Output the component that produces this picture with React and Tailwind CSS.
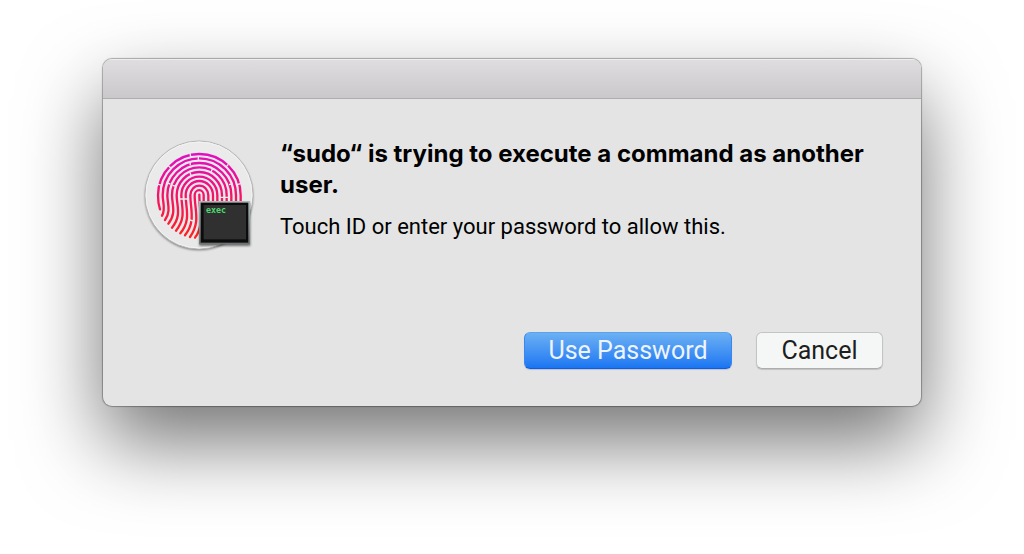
import React from "react";

const RIDGES = [
  "M72 232 C66 215 66 205 66 190 A124 124 0 0 1 314 190 L314 215",
  "M78 251 C90 230 80 212 80 190 A109 110 0 0 1 300 190 L300 215",
  "M87 264 C106 238 94 215 94 190 A95 96 0 0 1 286 190 L286 215",
  "M97 275 C122 245 108 218 108 190 A81 83 0 0 1 272 190 L272 215",
  "M108 287 C138 250 122 222 122 190 A67 69 0 0 1 258 190 L258 215",
  "M120 296 C152 256 136 226 136 190 A54 56 0 0 1 244 190 L244 215",
  "M133 304 C166 264 149 230 149 190 A41 43 0 0 1 231 190 L231 215",
  "M147 310 C180 268 163 232 163 190 A27 29 0 0 1 217 190 L217 215",
  "M162 315 C194 270 176 235 176 190 A13 15 0 0 1 203 190 L203 215",
  "M177 317 C205 280 190 235 190 188",
];

const BREAKS = [
  "M162 62 L164 74",
  "M162 90 L163 100",
  "M96 100 L105 109",
  "M66 157 L79 160",
  "M277 97 L269 106",
  "M313 155 L301 159",
  "M187 75 L187 86",
  "M94 153 L103 156",
  "M110 160 L122 164",
  "M229 111 L225 120",
  "M161 120 L165 129",
  "M252 196 L278 196",
  "M129 201 L157 201",
  "M157 262 L171 267",
  "M279 158 L290 155",
];

function TouchIdIcon() {
  return (
    <svg
      viewBox="24 24 330 330"
      className="size-[110px] shrink-0 overflow-visible"
      role="img"
      aria-label="Touch ID"
    >
      <defs>
        <linearGradient id="ink" gradientUnits="userSpaceOnUse" x1="0" y1="62" x2="0" y2="320">
          <stop offset="0" stopColor="#e00fc4" />
          <stop offset="0.25" stopColor="#ec109c" />
          <stop offset="0.5" stopColor="#f41466" />
          <stop offset="1" stopColor="#ff231c" />
        </linearGradient>
        <linearGradient id="disc" x1="0" y1="0" x2="0" y2="1">
          <stop offset="0" stopColor="#ebebeb" />
          <stop offset="1" stopColor="#e8e8e8" />
        </linearGradient>
        <linearGradient id="frame" x1="0" y1="0" x2="0" y2="1">
          <stop offset="0" stopColor="#a9b8ba" />
          <stop offset="1" stopColor="#6d7273" />
        </linearGradient>
        <filter id="soft" x="-20%" y="-20%" width="140%" height="140%">
          <feGaussianBlur stdDeviation="3" />
        </filter>
      </defs>
      <circle cx="189" cy="193" r="162" fill="#000" opacity="0.45" filter="url(#soft)" />
      <circle cx="189" cy="189" r="162" fill="url(#disc)" stroke="#b5b5b5" strokeWidth="3" />
      <circle cx="189" cy="189" r="159" fill="none" stroke="#f3f3f3" strokeWidth="3" />
      <g fill="none" stroke="url(#ink)" strokeWidth="7" strokeLinecap="round">
        {RIDGES.map((d) => (
          <path key={d} d={d} />
        ))}
      </g>
      <g fill="none" stroke="#ebebeb" strokeWidth="4">
        {BREAKS.map((d) => (
          <path key={d} d={d} />
        ))}
      </g>
      <rect x="190" y="212" width="153" height="130" fill="#000" opacity="0.5" filter="url(#soft)" />
      <rect x="189" y="207" width="153" height="130" fill="url(#frame)" />
      <rect x="194" y="212" width="143" height="120" fill="#0c0c0c" />
      <rect x="203" y="219" width="127" height="103" fill="#303030" />
      <text
        x="210"
        y="242"
        fill="#4fd873"
        fontFamily="'DejaVu Sans Mono', monospace"
        fontWeight="700"
        fontSize="25"
      >
        exec
      </text>
    </svg>
  );
}

export default function App() {
  return (
    <main className="min-h-screen bg-white px-6 pt-[59px] pb-36 font-['Roboto',sans-serif]">
      <section
        role="dialog"
        aria-labelledby="title"
        aria-describedby="detail"
        className="mx-auto w-full max-w-[818px] overflow-hidden rounded-[9px] bg-[#e4e4e4] text-black shadow-[0_0_1px_1px_rgba(0,0,0,0.3),0_36px_80px_rgba(0,0,0,0.55)]"
      >
        <div className="h-10 border-t border-b border-t-[#efedef] border-b-[#afadaf] bg-linear-to-b from-[#e0dde0] to-[#cac8cb]" />
        <div className="flex gap-[26px] px-[41px] pt-[41px]">
          <TouchIdIcon />
          <div className="-mt-[2px] min-w-0 flex-1">
            <h1 id="title" className="font-['Inter',sans-serif] text-[24px] leading-[31px] font-bold">
              “sudo“ is trying to execute a command as another user.
            </h1>
            <p id="detail" className="mt-[13px] text-[22px] leading-7">
              Touch ID or enter your password to allow this.
            </p>
          </div>
        </div>
        <div className="flex justify-end gap-6 pt-[82px] pr-[38px] pb-[37px]">
          <button
            type="button"
            className="h-[37px] w-[208px] rounded-[6px] border border-t-[#5ca3ee] border-r-[#3a87ee] border-b-[#0b5df0] border-l-[#3a87ee] bg-linear-to-b from-[#6bb0f3] to-[#1a75f2] text-[25px] leading-8 text-[#eef4fd] shadow-[0_1px_1px_rgba(0,0,0,0.15)]"
          >
            Use Password
          </button>
          <button
            type="button"
            className="h-[37px] w-[127px] rounded-[6px] border border-[#c4c4c4] border-b-[#adadad] bg-[#f5f7f6] text-[25px] leading-8 text-[#1e1e1e] shadow-[0_1px_1px_rgba(0,0,0,0.15)]"
          >
            Cancel
          </button>
        </div>
      </section>
    </main>
  );
}
